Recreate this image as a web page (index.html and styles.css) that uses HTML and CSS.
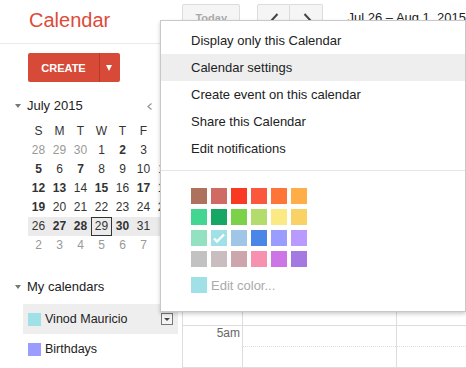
FILE: index.html
```html
<!DOCTYPE html>
<html lang="en">
<head>
    <meta charset="UTF-8">
    <meta name="viewport" content="width=device-width, initial-scale=1.0">
    <title>Calendar</title>
    <link rel="stylesheet" href="styles.css">
</head>
<body>
    <div class="app">
        <aside class="sidebar">
            <div class="logo">Calendar</div>
            <div class="create-row">
                <button class="create-btn"><span class="create-label">CREATE</span><span class="create-arrow"></span></button>
            </div>

            <div class="mini-head">
                <span class="caret"></span>
                <span class="mini-title">July 2015</span>
                <svg class="mini-nav" width="5" height="7" viewBox="0 0 5 7"><path d="M4.5 0.5 L1 3.5 L4.5 6.5" fill="none" stroke="#999" stroke-width="1.3"/></svg>
                <svg class="mini-nav" width="5" height="7" viewBox="0 0 5 7"><path d="M0.5 0.5 L4 3.5 L0.5 6.5" fill="none" stroke="#999" stroke-width="1.3"/></svg>
            </div>
            <div class="mini-cal">
                <!-- Weeks will be added here -->
            </div>

            <div class="section-head"><span class="caret"></span>My calendars</div>
            <ul class="cal-list">
                <li class="cal-item active">
                    <span class="cal-swatch swatch-teal"></span>
                    <span class="cal-name">Vinod Mauricio</span>
                    <span class="cal-menu"></span>
                </li>
                <li class="cal-item">
                    <span class="cal-swatch swatch-violet"></span>
                    <span class="cal-name">Birthdays</span>
                </li>
            </ul>
        </aside>

        <main class="main">
            <div class="toolbar">
                <div class="btn today-btn">Today</div>
                <div class="nav-group">
                    <div class="btn nav-btn nav-prev">
                        <svg width="10" height="16" viewBox="0 0 10 16"><path d="M8.5 1 L2 8 L8.5 15" fill="none" stroke="#444" stroke-width="2"/></svg>
                    </div>
                    <div class="btn nav-btn nav-next">
                        <svg width="10" height="16" viewBox="0 0 10 16"><path d="M1.5 1 L8 8 L1.5 15" fill="none" stroke="#444" stroke-width="2"/></svg>
                    </div>
                </div>
                <div class="date-range">Jul 26 – Aug 1, 2015</div>
            </div>

            <div class="week">
                <!-- Hour rows will be added here -->
            </div>
        </main>

        <div class="popup">
            <ul class="menu">
                <li class="menu-item">Display only this Calendar</li>
                <li class="menu-item hover">Calendar settings</li>
                <li class="menu-item">Create event on this calendar</li>
                <li class="menu-item">Share this Calendar</li>
                <li class="menu-item">Edit notifications</li>
            </ul>
            <div class="menu-sep"></div>
            <div class="palette">
                <!-- Colour chips will be added here -->
            </div>
            <div class="edit-color"><span class="edit-swatch"></span>Edit color...</div>
        </div>
    </div>

    <script>
        const palette = [
            '#ac725e', '#d06b64', '#f83a22', '#fa573c', '#ff7537', '#ffad46',
            '#42d692', '#16a765', '#7bd148', '#b3dc6c', '#fbe983', '#fad165',
            '#92e1c0', '#9fe1e7', '#9fc6e7', '#4986e7', '#9a9cff', '#b99aff',
            '#c2c2c2', '#cabdbf', '#cca6ac', '#f691b2', '#cd74e6', '#a47ae2'
        ];
        const selectedColor = '#9fe1e7';

        // o = other month, b = has events, s = selected day
        const weeks = [
            '28o 29o 30o 1 2b 3 4',
            '5b 6 7b 8 9 10 11',
            '12b 13b 14 15b 16 17b 18',
            '19b 20 21 22 23 24 25',
            '26 27b 28b 29s 30b 31 1o',
            '2o 3o 4o 5o 6o 7o 8o'
        ];
        const currentWeek = 4;

        // only the 5am label is in view, the rest sit under the popup
        const hours = ['', '', '', '', '', '5am', ''];

        function renderPalette() {
            const grid = document.querySelector('.palette');
            palette.forEach(color => {
                const chip = document.createElement('div');
                chip.classList.add('chip');
                chip.style.background = color;
                if (color === selectedColor) {
                    chip.innerHTML = '<svg width="16" height="16" viewBox="0 0 16 16"><path d="M3 8.5 L6 11.5 L13 4.5" fill="none" stroke="#fff" stroke-width="2.4"/></svg>';
                }
                grid.appendChild(chip);
            });
        }

        function renderMiniCal() {
            const cal = document.querySelector('.mini-cal');
            const head = document.createElement('div');
            head.classList.add('mini-week');
            head.innerHTML = ['S', 'M', 'T', 'W', 'T', 'F', 'S'].map(d => `<span>${d}</span>`).join('');
            cal.appendChild(head);

            weeks.forEach((week, i) => {
                const row = document.createElement('div');
                row.classList.add('mini-week');
                if (i === currentWeek) row.classList.add('current');
                week.split(' ').forEach(item => {
                    const cell = document.createElement('span');
                    cell.textContent = parseInt(item);
                    if (item.includes('o')) cell.classList.add('day-other');
                    if (item.includes('b')) cell.classList.add('day-bold');
                    if (item.includes('s')) cell.classList.add('day-selected');
                    row.appendChild(cell);
                });
                cal.appendChild(row);
            });
        }

        function renderWeek() {
            const week = document.querySelector('.week');
            const head = document.createElement('div');
            head.classList.add('week-head');
            head.innerHTML = '<div class="time"></div><div class="day"></div><div class="day"></div>';
            week.appendChild(head);

            hours.forEach(label => {
                const row = document.createElement('div');
                row.classList.add('hour');
                row.innerHTML = `
                    <div class="time">${label}</div>
                    <div class="day"><div class="half"></div></div>
                    <div class="day"><div class="half"></div></div>
                `;
                week.appendChild(row);
            });
        }

        renderPalette();
        renderMiniCal();
        renderWeek();
    </script>
</body>
</html>
```

FILE: styles.css
```css
:root {
    --red: #dd4b39;
    --text-color: #222;
    --line: #dddddd;
    --hover: #eeeeee;
}

body {
    font-family: "Liberation Sans", Arial, sans-serif;
    margin: 0;
    padding: 0;
    color: var(--text-color);
    background: #fff;
    overflow: hidden;
}

.app {
    position: relative;
    display: flex;
    width: 466px;
    height: 368px;
    overflow: hidden;
}

/* sidebar */

.sidebar {
    width: 182px;
    flex-shrink: 0;
}

.logo {
    height: 44px;
    box-sizing: border-box;
    border-bottom: 1px solid #ebebeb;
    padding: 10px 0 0 29px;
    font-size: 20px;
    line-height: 20px;
    color: var(--red);
}

.create-row {
    margin-top: 9px;
    padding-left: 28px;
}

.create-btn {
    display: flex;
    width: 92px;
    height: 29px;
    padding: 0;
    border: none;
    border-radius: 2px;
    background-color: #d84a38;
    color: #fff;
    font: bold 11px "Liberation Sans", Arial, sans-serif;
    overflow: hidden;
}

.create-label {
    width: 71px;
    height: 100%;
    display: flex;
    align-items: center;
    justify-content: center;
    border-right: 1px solid #b8392a;
}

.create-arrow {
    flex: 1;
    display: flex;
    align-items: center;
    justify-content: center;
    padding-right: 3px;
}

.create-arrow::before {
    content: "";
    border-left: 3.5px solid transparent;
    border-right: 3.5px solid transparent;
    border-top: 6px solid #fff;
}

.caret {
    width: 0;
    height: 0;
    border-left: 3.5px solid transparent;
    border-right: 3.5px solid transparent;
    border-top: 4px solid #777;
    margin: 0 6px 0 15px;
}

.mini-head {
    display: flex;
    align-items: center;
    margin-top: 16px;
    height: 16px;
    padding-right: 12px;
    gap: 13px;
}

.mini-head .caret {
    margin-right: -7px;
}

.mini-title {
    flex: 1;
    font-size: 13px;
    line-height: 16px;
}

.mini-cal {
    margin: 8px 0 0 28px;
    font-size: 12px;
}

.mini-week {
    display: grid;
    grid-template-columns: repeat(7, 21px);
    height: 19px;
    line-height: 19px;
    text-align: center;
    color: #333;
}

.mini-week.current {
    background-color: #ebebeb;
}

.day-bold {
    font-weight: bold;
}

.day-other {
    color: #999;
}

.day-selected {
    border: 1px solid #333;
    line-height: 17px;
}

.section-head {
    display: flex;
    align-items: center;
    margin-top: 24px;
    height: 16px;
    font-size: 13px;
    line-height: 16px;
}

.cal-list {
    list-style: none;
    margin: 9px 0 0 23px;
    padding: 0;
    width: 155px;
}

.cal-item {
    display: flex;
    align-items: center;
    gap: 4px;
    height: 30px;
    padding: 0 5px;
    font-size: 12.5px;
}

.cal-item.active {
    background-color: var(--hover);
}

.cal-swatch {
    width: 13px;
    height: 13px;
}

.swatch-teal {
    background-color: #9fe1e7;
}

.swatch-violet {
    background-color: #9a9cff;
}

.cal-name {
    flex: 1;
}

.cal-menu {
    width: 12px;
    height: 12px;
    box-sizing: border-box;
    border: 1px solid #777;
    background: #f4f4f4;
    display: flex;
    align-items: center;
    justify-content: center;
}

.cal-menu::before {
    content: "";
    border-left: 3px solid transparent;
    border-right: 3px solid transparent;
    border-top: 3px solid #444;
}

/* main week view */

.main {
    flex: 1;
    min-width: 0;
    display: flex;
    flex-direction: column;
}

.toolbar {
    display: flex;
    align-items: flex-start;
    padding-top: 4px;
    height: 27px;
    flex-shrink: 0;
}

.btn {
    height: 27px;
    box-sizing: border-box;
    border: 1px solid #dcdcdc;
    background-color: #f5f5f5;
    border-radius: 2px;
}

.today-btn {
    width: 71px;
    margin-right: 17px;
    text-align: center;
    font-size: 11px;
    font-weight: bold;
    line-height: 27px;
    color: #aaa;
}

.nav-group {
    display: flex;
    margin-right: 24px;
}

.nav-btn {
    width: 33px;
    display: flex;
    justify-content: center;
    padding-top: 8px;
}

.nav-prev {
    border-radius: 2px 0 0 2px;
}

.nav-next {
    border-left: none;
    border-radius: 0 2px 2px 0;
    padding-left: 3px;
}

.date-range {
    margin-top: 6px;
    font-size: 13px;
    line-height: 16px;
    white-space: nowrap;
}

.week {
    flex: 1;
    border-left: 1px solid var(--line);
    overflow: hidden;
}

.week-head,
.hour {
    display: flex;
    box-sizing: border-box;
    border-top: 1px solid var(--line);
}

.week-head {
    height: 84px;
}

.hour {
    height: 42px;
}

.time {
    width: 60px;
    flex-shrink: 0;
    box-sizing: border-box;
    border-right: 1px solid var(--line);
    padding-right: 2px;
    text-align: right;
    font-size: 12px;
    line-height: 14px;
    color: #666;
}

.day {
    width: 154px;
    flex-shrink: 0;
    box-sizing: border-box;
    border-right: 1px solid var(--line);
}

.half {
    height: 21px;
    box-sizing: border-box;
    border-bottom: 1px dotted var(--line);
}

/* calendar options popup */

.popup {
    position: absolute;
    left: 160px;
    top: 20px;
    width: 306px;
    height: 292px;
    box-sizing: border-box;
    padding-top: 6px;
    background: #fff;
    border: 1px solid #c8c8c8;
    box-shadow: 0 2px 4px rgba(0, 0, 0, 0.2);
    z-index: 10;
}

.menu {
    list-style: none;
    margin: 0;
    padding: 0;
}

.menu-item {
    height: 27px;
    line-height: 27px;
    padding-left: 30px;
    font-size: 13px;
}

.menu-item.hover {
    background-color: var(--hover);
}

.menu-sep {
    margin-top: 8px;
    border-top: 1px solid #e5e5e5;
}

.palette {
    display: grid;
    grid-template-columns: repeat(6, 16px);
    column-gap: 4px;
    row-gap: 5px;
    margin: 17px 0 0 30px;
}

.chip {
    width: 16px;
    height: 16px;
}

.chip svg {
    display: block;
}

.edit-color {
    display: flex;
    align-items: center;
    gap: 4px;
    margin: 10px 0 0 30px;
    font-size: 13px;
    color: #aaa;
}

.edit-swatch {
    width: 16px;
    height: 16px;
    background-color: #9fe1e7;
}
```
